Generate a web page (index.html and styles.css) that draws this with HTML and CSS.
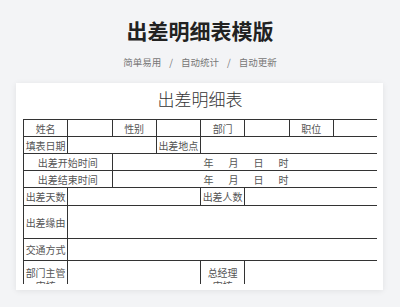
FILE: index.html
```html
<!DOCTYPE html>
<html lang="zh">
<head>
<meta charset="utf-8">
<link rel="stylesheet" href="styles.css">
</head>
<body>
<header class="header">
  <h1 class="heading">出差明细表模版</h1>
  <div class="sub"><span>简单易用</span><span class="sep">/</span><span>自动统计</span><span class="sep">/</span><span>自动更新</span></div>
</header>
<div class="card">
  <div class="sheet">
    <div class="doc-title">出差明细表</div>
    <table class="form">
      <colgroup>
        <col class="c"><col class="c"><col class="c"><col class="c"><col class="c"><col class="c"><col class="c"><col class="c">
      </colgroup>
      <tr class="r17">
        <td>姓名</td><td></td><td>性别</td><td></td><td>部门</td><td></td><td>职位</td><td></td>
      </tr>
      <tr class="r17">
        <td>填表日期</td><td colspan="2"></td><td>出差地点</td><td colspan="4"></td>
      </tr>
      <tr class="r17">
        <td colspan="2">出差开始时间</td><td colspan="6" class="date"><span>年</span><span>月</span><span>日</span><span>时</span></td>
      </tr>
      <tr class="r17">
        <td colspan="2">出差结束时间</td><td colspan="6" class="date"><span>年</span><span>月</span><span>日</span><span>时</span></td>
      </tr>
      <tr class="r18">
        <td>出差天数</td><td colspan="3"></td><td>出差人数</td><td colspan="3"></td>
      </tr>
      <tr class="r33">
        <td>出差缘由</td><td colspan="7"></td>
      </tr>
      <tr class="r22">
        <td>交通方式</td><td colspan="7"></td>
      </tr>
      <tr class="r30">
        <td class="wrap">部门主管<br>审核</td><td colspan="3"></td><td class="wrap">总经理<br>审核</td><td colspan="3"></td>
      </tr>
    </table>
  </div>
</div>
</body>
</html>
```
FILE: styles.css
```css
html, body {
  margin: 0;
  padding: 0;
}
body {
  background: #f3f4f6;
  font-family: "Noto Sans CJK SC", "Noto Sans", sans-serif;
  width: 400px;
  height: 307px;
  overflow: hidden;
}
.header {
  padding-top: 15px;
  text-align: center;
}
.heading {
  margin: 0;
  font-size: 21px;
  line-height: 30px;
  font-weight: 700;
  color: #222;
}
.sub {
  margin-top: 10px;
  font-size: 9.5px;
  line-height: 14px;
  color: #777;
  display: flex;
  justify-content: center;
}
.sep {
  margin: 0 8px;
}
.card {
  margin: 14px 0 0 16px;
  width: 367px;
  background: #fff;
  box-shadow: 0 1px 6px rgba(0, 0, 0, 0.08);
  padding: 3px 6px 6px 7px;
  box-sizing: border-box;
}
.sheet {
  height: 198px;
  overflow: hidden;
}
.doc-title {
  font-size: 17px;
  line-height: 25px;
  text-align: center;
  color: #333;
  margin-bottom: 8px;
  font-weight: 300;
}
.form {
  width: 354px;
  border-collapse: collapse;
  table-layout: fixed;
  font-size: 10px;
  color: #555;
}
.form .c {
  width: 44.25px;
}
.form td {
  border: 1px solid #333;
  padding: 0;
  text-align: center;
  line-height: 11px;
  white-space: nowrap;
  overflow: hidden;
}
.form td.wrap {
  vertical-align: top;
  padding-top: 5px;
  line-height: 13px;
}
.form td.date {
  text-align: left;
  padding-left: 91px;
}
.date span {
  display: inline-block;
  width: 25px;
}
.r17 { height: 17px; }
.r18 { height: 18px; }
.r22 { height: 22px; }
.r30 { height: 30px; }
.r33 { height: 33px; }
```
